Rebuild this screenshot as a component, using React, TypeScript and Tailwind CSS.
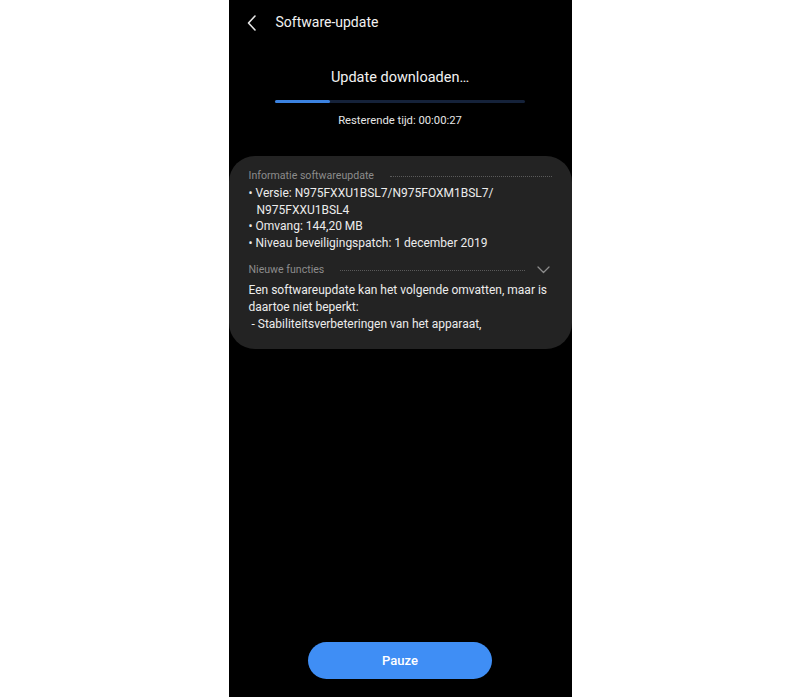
import React from "react";

export default function App() {
  return (
    <div className="w-full min-h-[697px] bg-white flex justify-center" style={{ fontFamily: "Roboto, 'Noto Sans', sans-serif" }}>
      <div className="w-[343px] h-[697px] bg-black flex flex-col text-[#f0f0f0]">
        {/* header */}
        <div className="h-[45px] flex items-center pl-[17px]">
          <svg width="12" height="18" viewBox="0 0 12 18" className="mr-[18px]">
            <path d="M9 2 L2.5 9 L9 16" fill="none" stroke="#e6e6e6" strokeWidth="1.6" strokeLinecap="round" strokeLinejoin="round" />
          </svg>
          <span className="text-[14px] text-[#f2f2f2]">Software-update</span>
        </div>
        {/* progress */}
        <div className="flex flex-col items-center">
          <div className="mt-[22px] text-[14.5px] leading-[22px] text-[#f2f2f2]">Update downloaden…</div>
          <div className="mt-[11px] w-[250px] h-[3px] bg-[#15223a] rounded-full flex">
            <div className="w-[55px] h-[3px] bg-[#3b82e0] rounded-full" />
          </div>
          <div className="mt-[10px] text-[11.25px] leading-[16px] text-[#e6e6e6]">Resterende tijd: 00:00:27</div>
        </div>
        {/* card */}
        <div className="mt-[27px] bg-[#232323] rounded-[26px] pt-[12px] pb-[17px] pl-[20px] pr-[20px]">
          <div className="flex items-center gap-[16px]">
            <span className="text-[10.6px] leading-[15px] text-[#8c8c8c]">Informatie softwareupdate</span>
            <div className="flex-1 border-t border-dotted border-[#5a5a5a] mt-[1px]" />
          </div>
          <div className="mt-[2px] text-[12px] leading-[16.6px] text-[#ececec] whitespace-nowrap">
            <div>• Versie: N975FXXU1BSL7/N975FOXM1BSL7/</div>
            <div className="pl-[8px]">N975FXXU1BSL4</div>
            <div>• Omvang: 144,20 MB</div>
            <div>• Niveau beveiligingspatch: 1 december 2019</div>
          </div>
          <div className="mt-[11px] flex items-center">
            <span className="text-[10.6px] leading-[15px] text-[#8c8c8c]">Nieuwe functies</span>
            <div className="flex-1 ml-[16px] mr-[12px] border-t border-dotted border-[#5a5a5a] mt-[1px]" />
            <svg width="13" height="8" viewBox="0 0 13 8" className="mr-[2px]">
              <path d="M1 1 L6.5 6.5 L12 1" fill="none" stroke="#8c8c8c" strokeWidth="1.3" strokeLinecap="round" strokeLinejoin="round" />
            </svg>
          </div>
          <div className="mt-[5px] text-[12px] leading-[16.6px] text-[#ececec] whitespace-nowrap">
            <div>Een softwareupdate kan het volgende omvatten, maar is</div>
            <div>daartoe niet beperkt:</div>
            <div>&nbsp;- Stabiliteitsverbeteringen van het apparaat,</div>
          </div>
        </div>
        {/* button */}
        <div className="mt-auto pb-[18px] flex justify-center">
          <button className="w-[184px] h-[37px] rounded-full bg-[#3f8ef5] text-white text-[13px] font-medium">Pauze</button>
        </div>
      </div>
    </div>
  );
}
